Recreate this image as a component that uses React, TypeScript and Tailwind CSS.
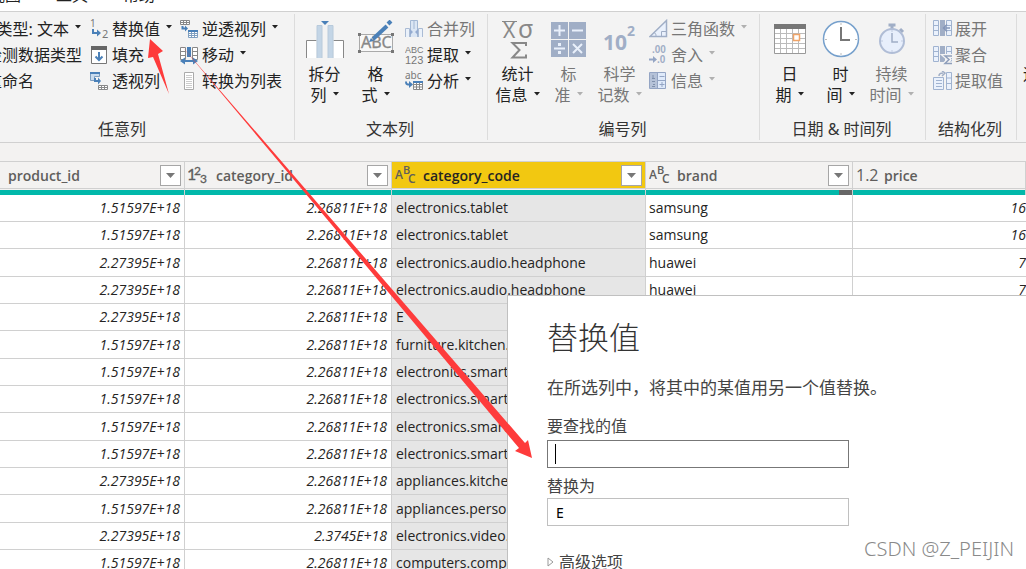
import React, { useState } from "react";

type IconProps = { children: React.ReactNode; w?: number; h?: number };

const Icon = ({ children, w = 20, h = 20 }: IconProps) => (
  <svg
    width={w}
    height={h}
    viewBox={`0 0 ${w} ${h}`}
    fill="none"
    className="shrink-0"
    aria-hidden="true"
  >
    {children}
  </svg>
);

const Caret = ({ muted }: { muted?: boolean }) => (
  <svg
    width="6"
    height="4"
    viewBox="0 0 6 4"
    className={muted ? "shrink-0 text-[#b0b0b0]" : "shrink-0"}
    aria-hidden="true"
  >
    <path d="M0 0h6L3 3.5z" fill="currentColor" />
  </svg>
);

const ReplaceIcon = () => (
  <Icon>
    <text x="0" y="8" fontSize="10" fill="#777">1</text>
    <text x="12" y="19" fontSize="11" fill="#777">2</text>
    <path d="M3 10v4h5" stroke="#4a80b8" strokeWidth="2" />
    <path d="M7 10.500l4 3.500-4 3.500z" fill="#4a80b8" />
  </Icon>
);

const FillIcon = () => (
  <Icon>
    <path d="M1.500 2.500h15v16h-15z" fill="#fff" stroke="#777" />
    <path d="M1 1h16v4H1z" fill="#666" />
    <path d="M9 7v8M5.500 11.500L9 15l3.500-3.500" stroke="#4a80b8" strokeWidth="2" />
  </Icon>
);

const PivotIcon = () => (
  <Icon>
    <path d="M.5 2.500h9v3h-5v4h-4z" fill="#c9dcef" stroke="#7f9fc0" />
    <path d="M0 1h10v2H0z" fill="#4a80b8" />
    <path d="M5 7v3h4" stroke="#4a80b8" strokeWidth="2" />
    <path d="M8 6.500l3 3.500-3 3.500z" fill="#4a80b8" />
    <path d="M8.500 14.500h9v4h-9zM8.500 16.500h9M11.500 14.500v4M14.500 14.500v4" fill="#fff" stroke="#888" />
  </Icon>
);

const UnpivotIcon = () => (
  <Icon>
    <path d="M.5 1.500h9v4h-9zM.5 3.500h9M3.500 1.500v4M6.500 1.500v4" fill="#fff" stroke="#888" />
    <path d="M2.500 7v2.500H6" stroke="#4a80b8" strokeWidth="2" />
    <path d="M5 6.500l3 3-3 3z" fill="#4a80b8" />
    <path d="M8.500 11.500h9v7h-9zM8.500 14.500h9M8.500 16.500h9M11.500 13v5M14.500 13v5" fill="#fff" stroke="#7f9fc0" />
    <path d="M8 11h10v2H8z" fill="#4a80b8" />
  </Icon>
);

const MoveIcon = () => (
  <Icon>
    <path d="M.5 2.500h5v12h-5zM.5 6.500h5M.5 10.500h5M12.500 2.500h5v12h-5zM12.500 6.500h5M12.500 10.500h5" fill="#fff" stroke="#888" />
    <path d="M7 2h4v10H7z" fill="#4a80b8" />
    <path d="M2 16h14" stroke="#4a80b8" strokeWidth="2" />
    <path d="M5 12.500v7L0 16zM13 12.500v7l5-3.500z" fill="#4a80b8" />
  </Icon>
);

const ListIcon = () => (
  <Icon>
    <path d="M4.500 1.500h9v17h-9z" fill="#fff" stroke="#aaa" />
    <path d="M6 4.500h6M6 6.500h6M6 8.500h6M6 10.500h6M6 12.500h6M6 14.500h6M6 16.500h6" stroke="#ccc" />
  </Icon>
);

const SplitIcon = () => (
  <Icon w={38} h={40}>
    <path d="M1 20h9v18H1zM28 20h9v18h-9z" fill="#fff" />
    <path d="M.5 38V20.500h10M37.500 38V20.500h-10" stroke="#888" />
    <path d="M11 38V5.500h5V38M22 38V5.500h5V38" fill="#c3d5e6" stroke="#b8cadb" />
    <path d="M15 1h8l-4 4z" fill="#4a80b8" />
  </Icon>
);

const FormatIcon = () => (
  <Icon w={38} h={40}>
    <path d="M2.500 14.500h33v17h-33z" fill="#f8f8f8" stroke="#aaa" />
    <text x="4" y="28" fontSize="16" fill="#888" stroke="#888" strokeWidth=".3">ABC</text>
    <path d="M1 13h3v3H1zM34 13h3v3h-3zM1 30h3v3H1zM34 30h3v3h-3z" fill="#777" />
    <path d="M16 19L30 6" stroke="#4a80b8" strokeWidth="4" />
    <path d="M31 4l3-3" stroke="#4a80b8" strokeWidth="4" />
    <path d="M12 22l2-4 3 3z" fill="#4a80b8" />
  </Icon>
);

const MergeIcon = () => (
  <Icon>
    <path d="M.5 18V9.500h4V18M13.500 18V9.500h4V18" fill="#eaf1fa" stroke="#aabbd4" />
    <path d="M5.500 18V1.500h7V18M9 2v8" fill="#dbe6f4" stroke="#a3b8d4" />
    <path d="M5 10l3 3-3 3zM13 10l-3 3 3 3z" fill="#94abd0" />
  </Icon>
);

const ExtractIcon = () => (
  <Icon>
    <g className="font-['Liberation_Sans',sans-serif]" fill="#777">
      <text x="0" y="8" fontSize="9">ABC</text>
      <text x="0" y="19" fontSize="11">123</text>
    </g>
  </Icon>
);

const ParseIcon = () => (
  <Icon>
    <text x="0" y="8" fontSize="10" fill="#777">abc</text>
    <path d="M1 10.500c0 3 1 3 4 3" stroke="#4a80b8" strokeWidth="2" />
    <path d="M4 10l4 3.500L4 17z" fill="#4a80b8" />
    <path d="M8.500 10.500h9v8h-9zM8.500 13.500h9M8.500 16h9M11.500 11v7M14.500 11v7" fill="#fff" stroke="#888" />
    <path d="M8 10h10v2H8z" fill="#4a80b8" />
  </Icon>
);

const StatsIcon = () => (
  <Icon w={36} h={40}>
    <text x="3" y="18" fontSize="21" fill="#888">X</text>
    <text x="18" y="18" fontSize="25" fill="#888">σ</text>
    <path d="M2 1.500h15" stroke="#888" />
    <path d="M26 26v-3H12.500l7 7-7 7.500H26v-3" stroke="#888" strokeWidth="2" />
  </Icon>
);

const StandardIcon = () => (
  <Icon w={36} h={40}>
    <path d="M0 2h17v17H0zM18 2h17v17H18zM0 20h17v17H0zM18 20h17v17H18z" fill="#a0aec6" />
    <path
      d="M8.500 5v11M3 10.500h11M21 10.500h11M3 28.500h11M22 24l9 9M31 24l-9 9"
      stroke="#e9f0fb"
      strokeWidth="2"
    />
    <path d="M7 23h3v3H7zM7 31h3v3H7z" fill="#e9f0fb" />
  </Icon>
);

const ScienceIcon = () => (
  <Icon w={34} h={40}>
    <text x="0" y="30" fontSize="21" fontWeight="700" fill="#a0aec6">10</text>
    <text x="24" y="16" fontSize="14" fontWeight="700" fill="#a0aec6">2</text>
  </Icon>
);

const TrigIcon = () => (
  <Icon>
    <path d="M1 17.500L17.500 1.500v16z" fill="#eaf1fc" stroke="#a0aec6" strokeWidth="1.500" />
    <path d="M12.500 17v-4.500H17M5 13.500c2 1 2 2 2 4" stroke="#a0aec6" />
  </Icon>
);

const RoundIcon = () => (
  <Icon>
    <g className="font-['Liberation_Sans',sans-serif] font-bold" fill="#a0aec6">
      <text x="3" y="8" fontSize="10">.00</text>
      <text x="8" y="18" fontSize="10">.0</text>
    </g>
    <path d="M0 14.500h5" stroke="#94a5c4" strokeWidth="2" />
    <path d="M4 11l4 3.500L4 18z" fill="#94a5c4" />
  </Icon>
);

const InfoIcon = () => (
  <Icon>
    <path d="M.5 1.500h16v16H.5z" fill="#dfeafa" stroke="#94a5c4" />
    <path d="M1 2h7v15H1z" fill="#b5c2d8" />
    <path d="M8.500 2v15M9 9.500h8M10.500 5.500h5M10.500 13.500h5M13 11v5" stroke="#94a5c4" />
    <path d="M4 4v3M3 7.500h3M3 10.500h3M4 13.500h2M3 15.500h3" stroke="#7f90ac" />
  </Icon>
);

const CalendarIcon = () => (
  <Icon w={34} h={40}>
    <path d="M1.500 5.500h31v28h-31z" fill="#fff" stroke="#999" />
    <path d="M7.500 9v24M13.500 9v24M19.500 9v24M25.500 9v24M2 13.500h30M2 18.500h30M2 23.500h30M2 28.500h30" stroke="#bbb" />
    <path d="M1 4h32v5H1z" fill="#777" />
    <path d="M20.500 14.500h6v6h-6z" fill="#fff" stroke="#f0a468" strokeWidth="1.500" />
  </Icon>
);

const ClockIcon = () => (
  <Icon w={38} h={40}>
    <circle cx="19" cy="19" r="17.500" fill="#fff" stroke="#76a0cc" strokeWidth="1.500" />
    <path d="M19 7v13h9" stroke="#777" strokeWidth="2" />
    <path d="M19 3v2M19 33v2M3 19.500h2M33 19.500h2" stroke="#bbb" />
  </Icon>
);

const DurationIcon = () => (
  <Icon w={28} h={40}>
    <path d="M10.500 5h7M14 4v5M22 9l3 3" stroke="#a0aec6" strokeWidth="3" />
    <circle cx="14" cy="21" r="12" fill="#e8effc" stroke="#b0bdd6" strokeWidth="2" />
    <path d="M14 13v9h6" stroke="#a0aec6" strokeWidth="1.500" />
    <path d="M14 10v2M14 30v2M3 21h2M23 21h2" stroke="#c0cbe0" />
  </Icon>
);

const TableBase = () => (
  <>
    <path d="M.5 1.500h5v15h-5zM.5 6.500h5M.5 11.500h5M13.500 1.500h5v15h-5zM13.500 6.500h5M13.500 11.500h5" fill="#eaf1fc" stroke="#a0b3d0" />
    <path d="M7 1h5v16H7z" fill="#a0aec6" />
  </>
);

const ExpandIcon = () => (
  <Icon>
    <TableBase />
    <path d="M17 9h-6M14 5.500L10.500 9l3.500 3.500" stroke="#8496b8" strokeWidth="1.500" />
  </Icon>
);

const AggregateIcon = () => (
  <Icon>
    <TableBase />
    <path d="M19 11h-7l4 3.500-4 4h7" stroke="#f3f3f3" strokeWidth="4" />
    <path d="M19 11h-7l4 3.500-4 4h7" stroke="#8f9fbb" strokeWidth="1.500" />
  </Icon>
);

const ExtractValuesIcon = () => (
  <Icon>
    <path d="M13.500 1.500h5v17h-5zM13.500 7h5M13.500 12.500h5" fill="#eaf1fc" stroke="#a0b3d0" />
    <path d="M.5 6.500h10v12H.5zM3 9.500h6M3 12.500h6M3 15.500h6" fill="#eaf1fc" stroke="#a0b3d0" />
    <path d="M6 5c0-2 1-3 4-3M9 0l3 2-3 3" stroke="#a0aec6" strokeWidth="1.500" />
  </Icon>
);

type ButtonProps = {
  icon?: React.ReactNode;
  label: string;
  caret?: boolean;
  disabled?: boolean;
};

const SmallButton = ({ icon, label, caret, disabled }: ButtonProps) => (
  <button
    disabled={disabled}
    className="flex h-[26px] items-center gap-0.5 whitespace-nowrap text-[#222] disabled:text-[#777]"
  >
    {icon}
    <span>{label}</span>
    {caret && (
      <span className="ml-1 pb-1">
        <Caret muted={disabled} />
      </span>
    )}
  </button>
);

type BigButtonProps = {
  icon: React.ReactNode;
  top: string;
  bottom: string;
  disabled?: boolean;
};

const BigButton = ({ icon, top, bottom, disabled }: BigButtonProps) => (
  <button
    disabled={disabled}
    className="flex w-[51px] flex-col items-center pt-1 leading-[21px] whitespace-nowrap text-[#222] disabled:text-[#777]"
  >
    {icon}
    <span className="mt-1">{top}</span>
    <span className="flex items-center gap-1.5">
      {bottom}
      <span className="pb-1">
        <Caret muted={disabled} />
      </span>
    </span>
  </button>
);

type GroupProps = { title: string; className: string; children: React.ReactNode };

const Group = ({ title, className, children }: GroupProps) => (
  <section
    className={`my-0.5 flex shrink-0 flex-col justify-between border-r border-[#dcdcdc] ${className}`}
  >
    <div className="flex items-start pt-0.5">{children}</div>
    <h2 className="pr-0.5 pb-px text-center leading-5 text-[#333]">{title}</h2>
  </section>
);

const Ribbon = () => (
  <div className="-ml-12 flex h-[132px] shrink-0 border-y border-[#d0d0d0] bg-[#f3f3f3]">
    <Group title="任意列" className="w-[343px]">
      <div className="flex w-[130px] flex-col">
        <div className="flex justify-end pr-px">
          <SmallButton label="数据类型: 文本" caret />
        </div>
        <div className="flex justify-end">
          <SmallButton label="检测数据类型" />
        </div>
        <div className="flex justify-end pr-12">
          <SmallButton label="重命名" />
        </div>
      </div>
      <div className="ml-2 w-[90px]">
        <SmallButton icon={<ReplaceIcon />} label="替换值" caret />
        <SmallButton icon={<FillIcon />} label="填充" caret />
        <SmallButton icon={<PivotIcon />} label="透视列" />
      </div>
      <div>
        <SmallButton icon={<UnpivotIcon />} label="逆透视列" caret />
        <SmallButton icon={<MoveIcon />} label="移动" caret />
        <SmallButton icon={<ListIcon />} label="转换为列表" />
      </div>
    </Group>
    <Group title="文本列" className="w-[193px]">
      <div className="ml-1 flex">
        <BigButton icon={<SplitIcon />} top="拆分" bottom="列" />
        <BigButton icon={<FormatIcon />} top="格" bottom="式" />
      </div>
      <div className="ml-1">
        <SmallButton icon={<MergeIcon />} label="合并列" disabled />
        <SmallButton icon={<ExtractIcon />} label="提取" caret />
        <SmallButton icon={<ParseIcon />} label="分析" caret />
      </div>
    </Group>
    <Group title="编号列" className="w-[272px]">
      <div className="ml-1 flex">
        <BigButton icon={<StatsIcon />} top="统计" bottom="信息" />
        <BigButton icon={<StandardIcon />} top="标" bottom="准" disabled />
        <BigButton icon={<ScienceIcon />} top="科学" bottom="记数" disabled />
      </div>
      <div className="ml-1">
        <SmallButton icon={<TrigIcon />} label="三角函数" caret disabled />
        <SmallButton icon={<RoundIcon />} label="舍入" caret disabled />
        <SmallButton icon={<InfoIcon />} label="信息" caret disabled />
      </div>
    </Group>
    <Group title="日期 & 时间列" className="w-[166px]">
      <div className="ml-1 flex">
        <BigButton icon={<CalendarIcon />} top="日" bottom="期" />
        <BigButton icon={<ClockIcon />} top="时" bottom="间" />
        <BigButton icon={<DurationIcon />} top="持续" bottom="时间" disabled />
      </div>
    </Group>
    <Group title="结构化列" className="w-[91px]">
      <div className="ml-[7px]">
        <SmallButton icon={<ExpandIcon />} label="展开" disabled />
        <SmallButton icon={<AggregateIcon />} label="聚合" disabled />
        <SmallButton icon={<ExtractValuesIcon />} label="提取值" disabled />
      </div>
    </Group>
    <span className="pt-[52px] pl-1.5 leading-5 text-[#222]">运</span>
  </div>
);

const TextType = () => (
  <svg width="22" height="22" viewBox="0 0 22 22" className="shrink-0" fill="currentColor" aria-hidden="true">
    <text x="0" y="15" fontSize="12">A</text>
    <text x="8" y="10" fontSize="11">B</text>
    <text x="13" y="19" fontSize="12">C</text>
  </svg>
);

const NumberType = () => (
  <svg width="22" height="22" viewBox="0 0 22 22" className="shrink-0" fill="currentColor" aria-hidden="true">
    <g className="font-['Lato',sans-serif] font-normal" stroke="currentColor" strokeWidth=".3">
      <text x="-1" y="16" fontSize="16">1</text>
      <text x="6" y="11" fontSize="12">2</text>
      <text x="12" y="19" fontSize="12">3</text>
    </g>
  </svg>
);

const columns = [
  { name: "product_id", type: null },
  { name: "category_id", type: <NumberType /> },
  { name: "category_code", type: <TextType />, selected: true },
  { name: "brand", type: <TextType />, partial: true },
  { name: "price", type: <span className="w-[22px] text-[16px] font-normal">1.2</span>, last: true },
];

const rows = [
  ["1.51597E+18", "2.26811E+18", "electronics.tablet", "samsung", "16"],
  ["1.51597E+18", "2.26811E+18", "electronics.tablet", "samsung", "16"],
  ["2.27395E+18", "2.26811E+18", "electronics.audio.headphone", "huawei", "7"],
  ["2.27395E+18", "2.26811E+18", "electronics.audio.headphone", "huawei", "7"],
  ["2.27395E+18", "2.26811E+18", "E", "", ""],
  ["1.51597E+18", "2.26811E+18", "furniture.kitchen.", "", ""],
  ["1.51597E+18", "2.26811E+18", "electronics.smartphone", "", ""],
  ["1.51597E+18", "2.26811E+18", "electronics.smartphone", "", ""],
  ["1.51597E+18", "2.26811E+18", "electronics.smartphone", "", ""],
  ["1.51597E+18", "2.26811E+18", "electronics.smartphone", "", ""],
  ["2.27395E+18", "2.26811E+18", "appliances.kitchen", "", ""],
  ["1.51597E+18", "2.26811E+18", "appliances.personal", "", ""],
  ["2.27395E+18", "2.3745E+18", "electronics.video.", "", ""],
  ["1.51597E+18", "2.26811E+18", "computers.components", "", ""],
];

const DataTable = () => (
  <table className="w-full table-fixed border-separate border-spacing-0 font-['Open_Sans','Noto_Sans',sans-serif] text-[14px] text-[#252423]">
    <colgroup>
      <col className="w-[185px]" />
      <col className="w-[207px]" />
      <col className="w-[254px]" />
      <col className="w-[207px]" />
      <col />
    </colgroup>
    <thead>
      <tr>
        {columns.map((col) => (
          <th
            key={col.name}
            className="border-t border-r border-[#d0d0d0] bg-[#f3f2f1] p-0 text-left font-semibold text-[#605e5c]"
          >
            <div
              className={`flex h-[26px] items-center pr-[3px] ${
                col.selected ? "bg-[#f2c811]" : ""
              } ${col.type ? "gap-1.5 pl-[3px]" : "pl-2"}`}
            >
              {col.type}
              <span className={`flex-1 ${col.selected ? "text-[#252423]" : ""}`}>{col.name}</span>
              {!col.last && (
                <button
                  aria-label={`筛选 ${col.name}`}
                  className="flex size-[21px] items-center justify-center border border-[#a6a6a6] bg-white text-[#777]"
                >
                  <svg width="9" height="5" viewBox="0 0 9 5" aria-hidden="true">
                    <path d="M0 0h9L4.500 5z" fill="currentColor" />
                  </svg>
                </button>
              )}
            </div>
            <div className="flex h-[7px] border-t border-[#d0d0d0] pt-px">
              <div className="flex-1 bg-[#01b8aa]" />
              {col.partial && <div className="w-[13px] bg-[#666]" />}
            </div>
          </th>
        ))}
      </tr>
    </thead>
    <tbody>
      {rows.map((row, i) => (
        <tr key={i} className="h-[27px] nth-[3n]:h-7">
          {row.map((cell, j) => (
            <td
              key={j}
              className={`overflow-hidden border-r border-b border-[#d0d0d0] py-0 leading-5 whitespace-nowrap ${
                j < 2 ? "pr-1 text-right italic" : ""
              } ${j === 2 ? "bg-[#e6e6e6] pl-1" : ""} ${j === 3 ? "pl-[3px]" : ""} ${
                j === 4 ? "border-r-0 pr-0 text-right italic" : ""
              }`}
            >
              {cell}
            </td>
          ))}
        </tr>
      ))}
    </tbody>
  </table>
);

const ReplaceDialog = () => {
  const [find, setFind] = useState("");
  const [replacement, setReplacement] = useState("E");

  return (
    <div
      role="dialog"
      aria-labelledby="dialog-title"
      className="absolute top-[295px] right-0 bottom-0 left-[507px] overflow-hidden border-t border-l border-[#c0c0c0] bg-white pt-5 pl-[39px] text-[#444]"
    >
      <h1 id="dialog-title" className="text-[31px] leading-[42px] font-light text-[#333]">
        替换值
      </h1>
      <p className="mt-[18px] text-[17px] leading-6">在所选列中，将其中的某值用另一个值替换。</p>
      <label htmlFor="find" className="mt-3.5 block leading-6">
        要查找的值
      </label>
      <div className="relative mt-0.5">
        <input
          id="find"
          value={find}
          onChange={(e) => setFind(e.target.value)}
          className="block h-7 w-[302px] border border-[#777] px-2 text-[14px] text-black"
        />
        <span className="absolute top-1 left-2 h-5 w-px bg-black" />
      </div>
      <label htmlFor="replacement" className="mt-1.5 block leading-6">
        替换为
      </label>
      <input
        id="replacement"
        value={replacement}
        onChange={(e) => setReplacement(e.target.value)}
        className="block h-7 w-[302px] border border-[#c0c0c0] px-2 text-[14px] text-black"
      />
      <button className="mt-6 flex items-center gap-[5px] leading-6">
        <svg width="7" height="10" viewBox="0 0 7 10" fill="none" aria-hidden="true">
          <path d="M1 1v8l5-4z" stroke="#999" />
        </svg>
        高级选项
      </button>
    </div>
  );
};

export default function App() {
  return (
    <div className="relative flex h-screen flex-col overflow-hidden bg-[#f3f2f1] font-['Noto_Sans','Noto_Sans_CJK_SC',sans-serif] text-[16px]">
      <nav className="flex h-[11px] shrink-0 items-end gap-[35px] overflow-hidden bg-white pb-1 text-[#222]">
        <a href="#view" className="-ml-[11px] leading-6">视图</a>
        <a href="#tools" className="leading-6">工具</a>
        <a href="#help" className="leading-6">帮助</a>
      </nav>
      <Ribbon />
      <div className="mt-[18px] flex-1 bg-white">
        <DataTable />
      </div>
      <ReplaceDialog />
      <svg className="pointer-events-none absolute top-0 left-0" width="560" height="480" viewBox="0 0 560 480" aria-hidden="true">
        <path d="M150 39l13 12-5 3 11 40-16-37-5 1z" fill="#fe3b3b" />
        <path d="M180 44L525 443l3-3 4 18-17-7 4-3z" fill="#fe3b3b" />
      </svg>
      <span className="absolute right-3 bottom-2 text-[20px] leading-6 font-light text-[#8a8a8a]">
        CSDN @Z_PEIJIN
      </span>
    </div>
  );
}
